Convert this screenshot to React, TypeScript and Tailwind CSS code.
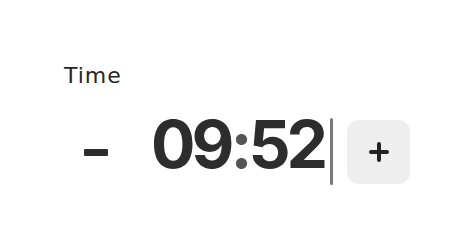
import React from 'react';

export default function App() {
  return (
    <div className="w-[476px] h-[249px] bg-white" style={{ fontFamily: 'Inter, "DejaVu Sans", sans-serif' }}>
      <div className="pt-[65px] pl-[64px]">
        <label className="block text-[22px] leading-[22px] text-[#262626] tracking-[1px]" style={{ fontFamily: '"DejaVu Sans", sans-serif' }}>
          Time
        </label>
        <div className="mt-[31px] flex items-start">
          <button className="mt-[2px] w-[64px] h-[64px] flex items-center justify-center text-[#2d2d2d]">
            <svg width="24" height="7" viewBox="0 0 24 7">
              <rect x="0" y="0" width="24" height="7" rx="1" fill="currentColor" />
            </svg>
          </button>
          <span className="ml-[23px] mt-[-7px] text-[66px] leading-none font-bold text-[#2d2d2d] tracking-[-4px]">
            09<span className="text-[#555555]">:</span>52
          </span>
          <div className="ml-[6px] w-[3px] h-[67px] rounded-full bg-[#7a7a7a]" />
          <button className="ml-[14px] mt-[2px] w-[63px] h-[64px] rounded-[12px] bg-[#eeeeee] flex items-center justify-center text-[#222222]">
            <svg width="20" height="20" viewBox="0 0 20 20">
              <path d="M10 2v16M2 10h16" stroke="currentColor" strokeWidth="4" strokeLinecap="round" />
            </svg>
          </button>
        </div>
      </div>
    </div>
  );
}
